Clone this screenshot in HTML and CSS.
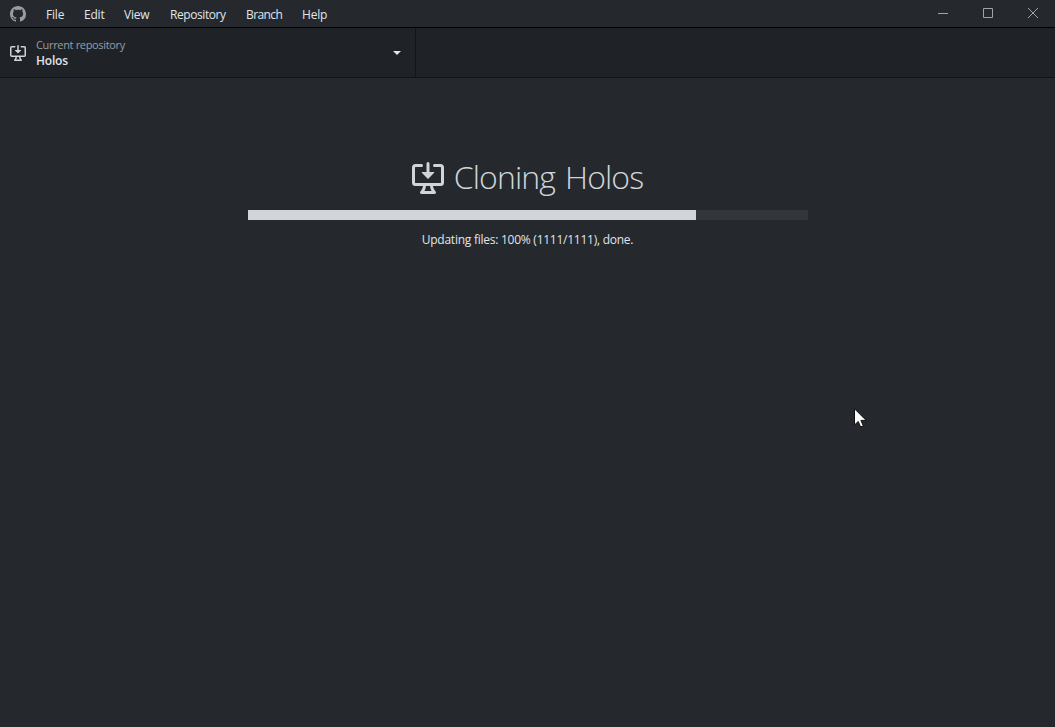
FILE: index.html
```html
<!DOCTYPE html>
<html lang="en">
<head>
<meta charset="utf-8">
<title>GitHub Desktop</title>
<link rel="stylesheet" href="styles.css">
</head>
<body>
<svg class="symbols" aria-hidden="true">
  <symbol id="desktop-download" viewBox="0 0 16 16">
    <path d="M4.927 5.427l2.896 2.896a.25.25 0 00.354 0l2.896-2.896A.25.25 0 0010.896 5H8.75V.75a.75.75 0 10-1.5 0V5H5.104a.25.25 0 00-.177.427z"/>
    <path d="M1.573 2.573a.25.25 0 00-.073.177v7.5a.25.25 0 00.25.25h12.5a.25.25 0 00.25-.25v-7.5a.25.25 0 00-.25-.25h-3a.75.75 0 110-1.5h3A1.75 1.75 0 0116 2.75v7.5A1.75 1.75 0 0114.25 12h-3.727c.099 1.041.52 1.872 1.292 2.757A.75.75 0 0111.25 16h-6.5a.75.75 0 01-.565-1.243c.772-.885 1.192-1.716 1.292-2.757H1.75A1.75 1.75 0 010 10.25v-7.5A1.75 1.75 0 011.75 1h3a.75.75 0 010 1.5h-3a.25.25 0 00-.177.073zM6.982 12a5.72 5.72 0 01-.765 2.5h3.566a5.72 5.72 0 01-.765-2.5H6.982z"/>
  </symbol>
</svg>
<div class="app">
  <header class="titlebar">
    <svg class="logo" viewBox="0 0 16 16"><path fill-rule="evenodd" d="M8 0C3.58 0 0 3.58 0 8c0 3.54 2.29 6.53 5.47 7.59.4.07.55-.17.55-.38 0-.19-.01-.82-.01-1.49-2.01.37-2.53-.49-2.69-.94-.09-.23-.48-.94-.82-1.13-.28-.15-.68-.52-.01-.53.63-.01 1.08.58 1.23.82.72 1.21 1.87.87 2.33.66.07-.52.28-.87.51-1.07-1.78-.2-3.64-.89-3.64-3.95 0-.87.31-1.59.82-2.15-.08-.2-.36-1.02.08-2.12 0 0 .67-.21 2.2.82.64-.18 1.32-.27 2-.27s1.36.09 2 .27c1.53-1.04 2.2-.82 2.2-.82.44 1.1.16 1.92.08 2.12.51.56.82 1.27.82 2.15 0 3.07-1.87 3.75-3.65 3.95.29.25.54.73.54 1.48 0 1.07-.01 1.93-.01 2.2 0 .21.15.46.55.38A8.01 8.01 0 0016 8c0-4.42-3.58-8-8-8z"/></svg>
    <nav class="menu">
      <span class="item file">File</span>
      <span class="item edit">Edit</span>
      <span class="item view">View</span>
      <span class="item repo">Repository</span>
      <span class="item branch">Branch</span>
      <span class="item help">Help</span>
    </nav>
    <div class="controls">
      <svg viewBox="0 0 45 27"><path d="M18 13.5h10"/></svg>
      <svg viewBox="0 0 45 27"><path d="M18.500 8.500h9v9h-9z"/></svg>
      <svg viewBox="0 0 45 27"><path d="M18 8l10 10M28 8L18 18"/></svg>
    </div>
  </header>
  <div class="toolbar">
    <div class="repository">
      <svg class="repository-icon"><use href="#desktop-download"/></svg>
      <div class="labels">
        <div class="description"><span>Current repository</span></div>
        <div class="name"><span>Holos</span></div>
      </div>
      <svg class="caret" viewBox="0 0 8 4"><path d="M0 0h8L4 4z"/></svg>
    </div>
  </div>
  <main class="cloning">
    <h1 class="title">
      <svg class="title-icon"><use href="#desktop-download"/></svg>
      <span>Cloning Holos</span>
    </h1>
    <div class="progress"><div class="bar" style="width:80%"></div></div>
    <div class="status"><span>Updating files: 100% (1111/1111), done.</span></div>
  </main>
</div>
<svg class="cursor" viewBox="0 0 13 20"><path d="M.5.8v16.200l3.700-3.600 2.400 5.500 2.700-1.100-2.400-5.400h5.300z"/></svg>
</body>
</html>
```
FILE: styles.css
```css
* { box-sizing: border-box; }
body { margin: 0; background: #25292e; font-family: "Open Sans", "Noto Sans", sans-serif; font-size: 12px; color: #e1e4e8; overflow: hidden; }
svg { display: block; flex: none; }
.symbols { display: none; }
.app { display: flex; flex-direction: column; height: 727px; }
.titlebar { display: flex; height: 28px; border-bottom: 1px solid #000; padding-left: 10px; }
.logo { width: 16px; height: 16px; margin-top: 6px; fill: #959da5; }
.menu { display: flex; margin-left: 20px; gap: 20px; line-height: 30px; white-space: nowrap; letter-spacing: -0.2px; }
.file { width: 18px; }
.edit { width: 20px; }
.view { width: 26px; }
.repo { width: 56px; letter-spacing: -0.42px; }
.branch { width: 36px; letter-spacing: -0.6px; }
.controls { display: flex; margin-left: auto; }
.controls svg { width: 45px; height: 27px; fill: none; stroke: #a0a3a6; stroke-width: 1; }
.toolbar { display: flex; height: 50px; background: #1f2327; border-bottom: 1px solid #141414; }
.repository { display: flex; align-items: center; width: 416px; padding: 0 14px 0 10px; border-right: 1px solid #141414; }
.repository-icon { width: 16px; height: 16px; fill: #d1d5da; margin-top: 1px; }
.labels { flex: 1; margin-left: 10px; line-height: 16px; }
.description { font-size: 11px; color: #959da5; letter-spacing: -0.34px; }
.name { font-weight: 600; letter-spacing: -0.2px; }
.caret { width: 8px; height: 4px; fill: #e1e4e8; }
.cloning { display: flex; flex-direction: column; align-items: center; padding-top: 80px; }
.title { display: flex; align-items: center; gap: 10px; height: 40px; margin: 0; font-size: 32px; font-weight: 300; line-height: 38px; letter-spacing: -0.9px; word-spacing: 2.6px; color: #d1d5da; white-space: nowrap; }
.title span { padding-bottom: 2px; }
.title-icon { width: 32px; height: 32px; fill: #d1d5da; }
.progress { width: 560px; height: 10px; margin-top: 12px; background: #33373c; }
.bar { height: 10px; background: #d1d5da; }
.status { margin-top: 11px; line-height: 18px; letter-spacing: -0.25px; }
.cursor { position: absolute; left: 854px; top: 408px; width: 13px; height: 20px; fill: #fff; stroke: #111; stroke-width: 1; }
```
